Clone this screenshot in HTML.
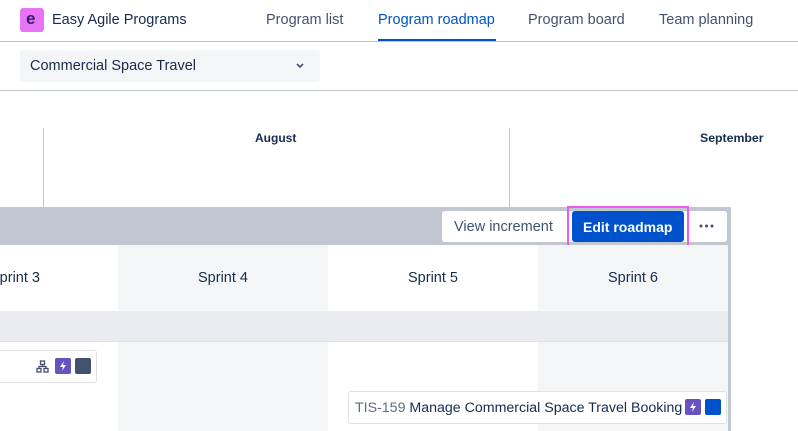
<!DOCTYPE html>
<html><head><style>
*{margin:0;padding:0;box-sizing:border-box}
body{width:798px;height:431px;overflow:hidden;background:#fff;font-family:"Liberation Sans",sans-serif;color:#172b4d;position:relative}
.a{position:absolute}
.nav{font-size:14.5px;color:#42526e;top:12px}
.sp{top:245px;height:66px;font-size:14.5px;display:flex;align-items:center;justify-content:center;color:#172b4d}
</style></head><body>
<div class="a" style="left:20px;top:8px;width:24px;height:24px;background:#e774f7;border-radius:3px"></div>
<div class="a" style="left:26px;top:9px;font-weight:bold;font-size:17px;color:#3b1a6a">e</div>
<div class="a" style="left:52px;top:12px;font-size:14.5px;color:#172b4d">Easy Agile Programs</div>
<div class="a nav" style="left:266px">Program list</div>
<div class="a nav" style="left:378px;color:#0052cc">Program roadmap</div>
<div class="a" style="left:378px;top:39px;width:118px;height:2px;background:#0052cc"></div>
<div class="a nav" style="left:528px">Program board</div>
<div class="a nav" style="left:659px">Team planning</div>
<div class="a" style="left:0;top:41px;width:798px;height:1px;background:#c1c7d0"></div>
<div class="a" style="left:20px;top:50px;width:300px;height:32px;background:#f4f5f7;border-radius:3px"></div>
<div class="a" style="left:30px;top:58px;font-size:14.5px">Commercial Space Travel</div>
<svg class="a" style="left:295px;top:62px" width="10" height="8"><path d="M2 2l3 3 3-3" stroke="#42526e" stroke-width="1.6" fill="none"/></svg>
<div class="a" style="left:0;top:90px;width:798px;height:1px;background:#c1c7d0"></div>
<div class="a" style="left:43px;top:128px;width:1px;height:79px;background:#c1c7d0"></div>
<div class="a" style="left:509px;top:128px;width:1px;height:79px;background:#c1c7d0"></div>
<div class="a" style="left:255px;top:131px;font-size:12px;font-weight:bold">August</div>
<div class="a" style="left:700px;top:131px;font-size:12.3px;font-weight:bold">September</div>
<div class="a" style="left:0;top:207px;width:731px;height:224px;background:#c1c7d0"></div>
<div class="a" style="left:442px;top:211px;width:123px;height:31px;background:#fff;border-radius:3px 0 0 3px"></div>
<div class="a" style="left:454px;top:219px;font-size:14.5px;color:#42526e">View increment</div>
<div class="a" style="left:565px;top:211px;width:162px;height:31px;background:#fff;border-radius:0 3px 3px 0"></div>
<div class="a" style="left:567px;top:206px;width:122px;height:42px;border:2px solid #ef5bef"></div>
<div class="a" style="left:572px;top:211px;width:112px;height:31px;background:#0052cc;border-radius:3px"></div>
<div class="a" style="left:583px;top:219px;font-size:14px;font-weight:bold;color:#fff">Edit roadmap</div>
<svg class="a" style="left:699px;top:224px" width="16" height="4"><circle cx="2" cy="2" r="1.5" fill="#42526e"/><circle cx="7.5" cy="2" r="1.5" fill="#42526e"/><circle cx="13" cy="2" r="1.5" fill="#42526e"/></svg>
<div class="a sp" style="left:0;width:118px;background:#fff;justify-content:flex-start"><span style="margin-left:-10px">Sprint 3</span></div>
<div class="a sp" style="left:118px;width:210px;background:#f4f5f7">Sprint 4</div>
<div class="a sp" style="left:328px;width:210px;background:#fff">Sprint 5</div>
<div class="a sp" style="left:538px;width:190px;background:#f4f5f7">Sprint 6</div>
<div class="a" style="left:0;top:311px;width:728px;height:31px;background:#ebecf0;border-bottom:1px solid #dfe1e6"></div>
<div class="a" style="left:0;top:342px;width:118px;height:89px;background:#fff"></div>
<div class="a" style="left:118px;top:342px;width:210px;height:89px;background:#f4f5f7"></div>
<div class="a" style="left:328px;top:342px;width:210px;height:89px;background:#fff"></div>
<div class="a" style="left:538px;top:342px;width:190px;height:89px;background:#f4f5f7"></div>
<div class="a" style="left:-4px;top:350px;width:101px;height:33px;background:#fff;border:1px solid #dfe1e6;border-radius:3px"></div>
<svg class="a" style="left:36px;top:360px" width="13" height="13"><g fill="none" stroke="#42526e" stroke-width="1.3"><rect x="4.5" y="1" width="4" height="3.5"/><rect x="1" y="8.5" width="4" height="3.5"/><rect x="8" y="8.5" width="4" height="3.5"/><path d="M6.5 4.5v2M3 8.5V6.5h7v2"/></g></svg>
<div class="a" style="left:55px;top:358px;width:16px;height:16px;background:#6554c0;border-radius:2px"></div>
<svg class="a" style="left:55px;top:358px" width="16" height="16"><path d="M9 3L5 9h3l-1 4 4-6H8z" fill="#fff"/></svg>
<div class="a" style="left:75px;top:358px;width:16px;height:16px;background:#42526e;border-radius:2px"></div>
<div class="a" style="left:348px;top:391px;width:379px;height:33px;background:#fff;border:1px solid #dfe1e6;border-radius:3px"></div>
<div class="a" style="left:355px;top:400px;font-size:14.2px;white-space:nowrap"><span style="color:#5e6c84">TIS-159</span> Manage Commercial Space Travel Booking</div>
<div class="a" style="left:685px;top:399px;width:16px;height:16px;background:#6554c0;border-radius:2px"></div>
<svg class="a" style="left:685px;top:399px" width="16" height="16"><path d="M9 3L5 9h3l-1 4 4-6H8z" fill="#fff"/></svg>
<div class="a" style="left:705px;top:399px;width:16px;height:16px;background:#0052cc;border-radius:2px"></div>
</body></html>
